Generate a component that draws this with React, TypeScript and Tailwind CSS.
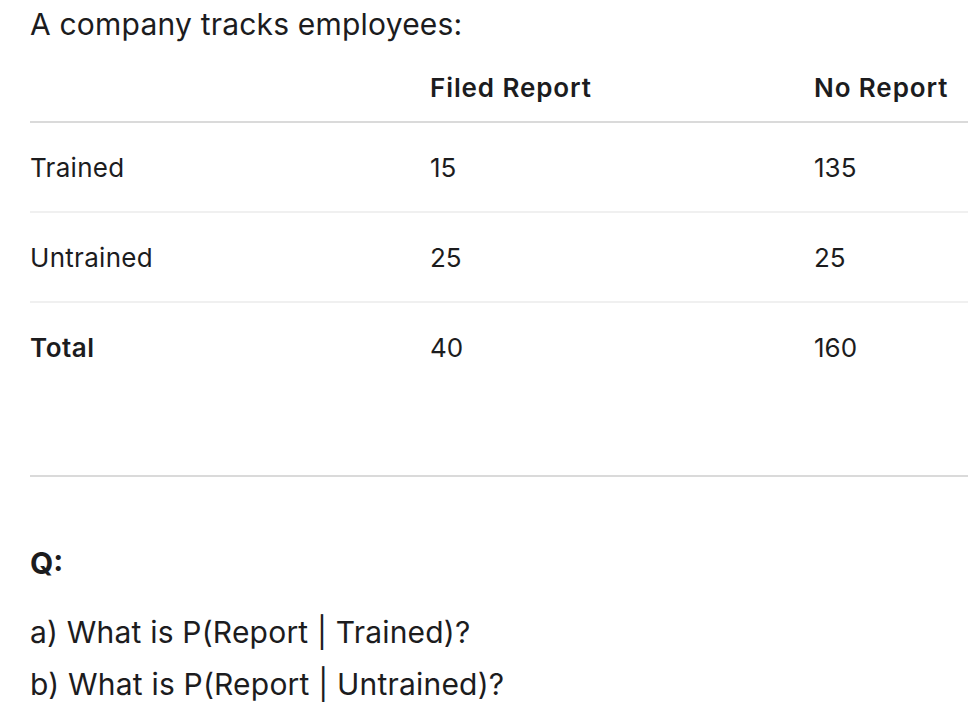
const rows = [
  { label: 'Trained', filed: '15', none: '135', bold: false },
  { label: 'Untrained', filed: '25', none: '25', bold: false },
  { label: 'Total', filed: '40', none: '160', bold: true },
];

export default function App() {
  return (
    <div
      className="min-h-screen overflow-hidden bg-white pl-[30px] text-[#1c1c1e]"
      style={{ fontFamily: 'Inter, "Noto Sans", sans-serif' }}
    >
      <p className="pt-[4px] text-[30px] leading-[40px] tracking-[0.2px]">A company tracks employees:</p>

      <table className="mt-[18px] w-[938px] table-fixed border-collapse text-[26px]">
        <thead>
          <tr className="h-[60px] border-b-2 border-[#dadada]">
            <th className="w-[400px] text-left"></th>
            <th className="w-[384px] pb-[8px] text-left font-semibold tracking-[0.9px]">Filed Report</th>
            <th className="pb-[8px] text-left font-semibold tracking-[0.9px]">No Report</th>
          </tr>
        </thead>
        <tbody>
          {rows.map((r, i) => (
            <tr
              key={r.label}
              className={i < rows.length - 1 ? 'h-[90px] border-b-2 border-[#f0f0f0]' : 'h-[90px]'}
            >
              <td className={r.bold ? 'font-semibold tracking-[0.5px]' : 'tracking-[0.3px]'}>{r.label}</td>
              <td>{r.filed}</td>
              <td>{r.none}</td>
            </tr>
          ))}
        </tbody>
      </table>

      <div className="mt-[83px] h-[2px] bg-[#dadada]" />

      <h3 className="mt-[68px] text-[30px] font-bold leading-[36px]">Q:</h3>

      <div className="mt-[25px] text-[30px] leading-[52px] tracking-[0.2px]">
        <p>a) What is P(Report | Trained)?</p>
        <p>b) What is P(Report | Untrained)?</p>
      </div>
    </div>
  );
}
